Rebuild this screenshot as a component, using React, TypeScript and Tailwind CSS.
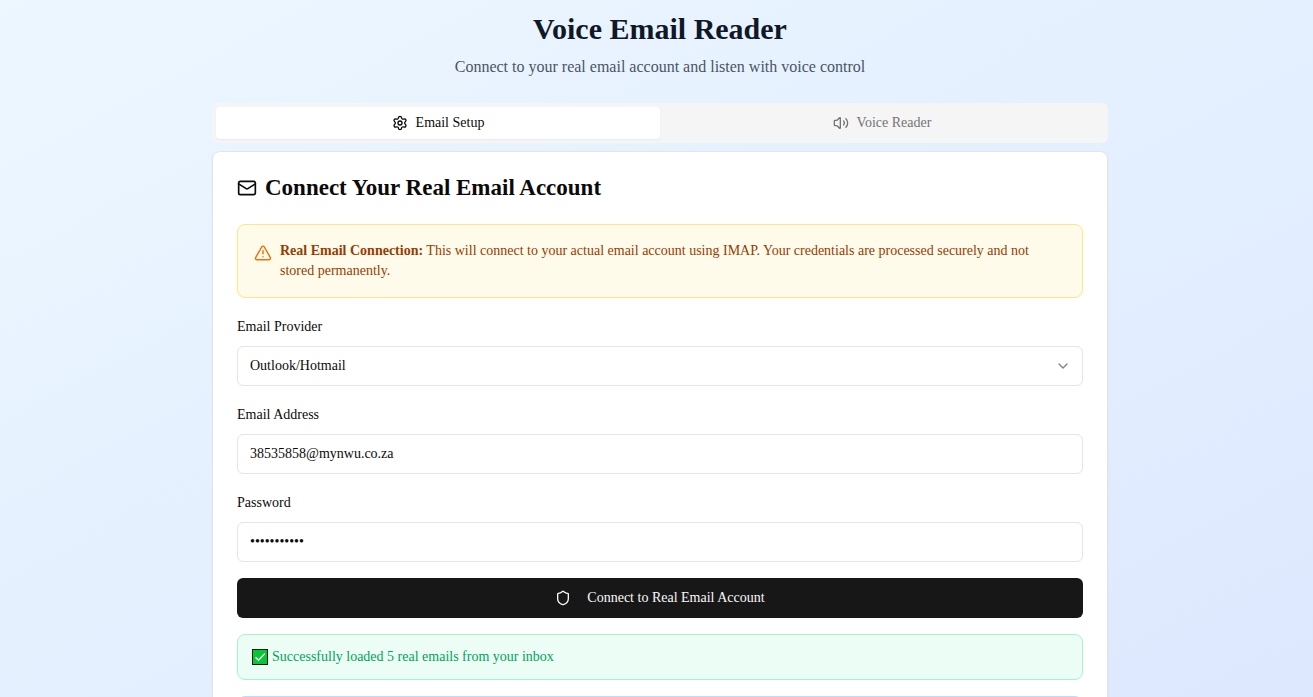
import React, { useState } from "react";
import { ChevronDown, Mail, Settings, Shield, TriangleAlert, Volume2 } from "lucide-react";

const fieldClass =
  "block h-10 w-full rounded-md border border-[#e5e5e5] bg-white px-3 py-2 text-sm text-[#0a0a0a] outline-none focus-visible:ring-2 focus-visible:ring-neutral-400";

function Field({ id, label, children }: { id: string; label: string; children: React.ReactNode }) {
  return (
    <div className="flex flex-col gap-1.5">
      <label htmlFor={id} className="text-sm leading-[26px] text-[#0a0a0a]">
        {label}
      </label>
      {children}
    </div>
  );
}

function CheckMark() {
  return (
    <svg viewBox="0 0 16 16" className="size-4 shrink-0" role="img" aria-label="Success">
      <rect x="0.5" y="0.5" width="15" height="15" fill="#06c836" stroke="#0d1a10" />
      <path d="M3.5 8.2 6.5 11.2 12.8 4.6" fill="none" stroke="#fff" strokeWidth="1.3" />
    </svg>
  );
}

export default function App() {
  const [provider, setProvider] = useState("outlook");
  const [email, setEmail] = useState("38535858@mynwu.co.za");
  const [password, setPassword] = useState("voicereader");

  return (
    <div className="h-screen overflow-hidden bg-linear-to-br from-[#ecf7ff] to-[#dde8ff] pl-[7px] font-['Liberation_Serif',serif]">
      <main className="mx-auto max-w-4xl pt-[11px]">
        <header className="mb-6 text-center">
          <h1 className="mb-2 text-3xl font-bold leading-9 text-[#101828]">Voice Email Reader</h1>
          <p className="text-base leading-6 text-[#4a5565]">
            Connect to your real email account and listen with voice control
          </p>
        </header>

        <div role="tablist" className="grid h-10 grid-cols-2 rounded-md bg-[#f5f5f5] p-1 text-sm">
          <button
            role="tab"
            aria-selected="true"
            className="flex items-center justify-center gap-2 rounded-sm bg-white text-[#0a0a0a] shadow-xs"
          >
            <Settings className="size-4" />
            Email Setup
          </button>
          <button
            role="tab"
            aria-selected="false"
            className="flex items-center justify-center gap-2 rounded-sm text-[#737373]"
          >
            <Volume2 className="size-4" />
            Voice Reader
          </button>
        </div>

        <section className="mt-2 rounded-lg border border-[#e5e5e5] bg-white p-6 shadow-xs">
          <h2 className="flex items-center gap-2 text-[23px] font-semibold leading-6 text-[#0a0a0a]">
            <Mail className="size-5" />
            Connect Your Real Email Account
          </h2>

          <form className="mt-6 flex flex-col gap-4" onSubmit={(e) => e.preventDefault()}>
            <div className="flex items-start gap-2 rounded-lg border border-[#fee685] bg-[#fffbeb] p-4">
              <TriangleAlert className="mt-0.5 h-5 w-[18px] shrink-0 text-[#e8750a]" />
              <p className="text-sm leading-5 text-[#973c00]">
                <strong>Real Email Connection:</strong> This will connect to your actual email account using
                IMAP. Your credentials are processed securely and not stored permanently.
              </p>
            </div>

            <Field id="provider" label="Email Provider">
              <div className="relative">
                <select
                  id="provider"
                  value={provider}
                  onChange={(e) => setProvider(e.target.value)}
                  className={`${fieldClass} appearance-none`}
                >
                  <option value="outlook">Outlook/Hotmail</option>
                  <option value="gmail">Gmail</option>
                  <option value="yahoo">Yahoo</option>
                </select>
                <ChevronDown className="pointer-events-none absolute right-3 top-3 size-4 text-[#0a0a0a] opacity-50" />
              </div>
            </Field>

            <Field id="email" label="Email Address">
              <input
                id="email"
                type="email"
                value={email}
                onChange={(e) => setEmail(e.target.value)}
                className={fieldClass}
              />
            </Field>

            <Field id="password" label="Password">
              <input
                id="password"
                type="password"
                value={password}
                onChange={(e) => setPassword(e.target.value)}
                className={fieldClass}
              />
            </Field>

            <button
              type="submit"
              className="flex h-10 items-center justify-center gap-4 rounded-md bg-[#171717] text-sm text-[#fafafa]"
            >
              <Shield className="size-4" />
              Connect to Real Email Account
            </button>

            <p
              role="status"
              className="flex items-center gap-1 rounded-lg border border-[#a4f4cf] bg-[#ecfdf5] px-3.5 py-3 text-sm leading-5 text-[#00a35c]"
            >
              <CheckMark />
              Successfully loaded 5 real emails from your inbox
            </p>

            <div className="h-16 rounded-lg border border-[#bedbff] bg-[#eff6ff]" />
          </form>
        </section>
      </main>
    </div>
  );
}
